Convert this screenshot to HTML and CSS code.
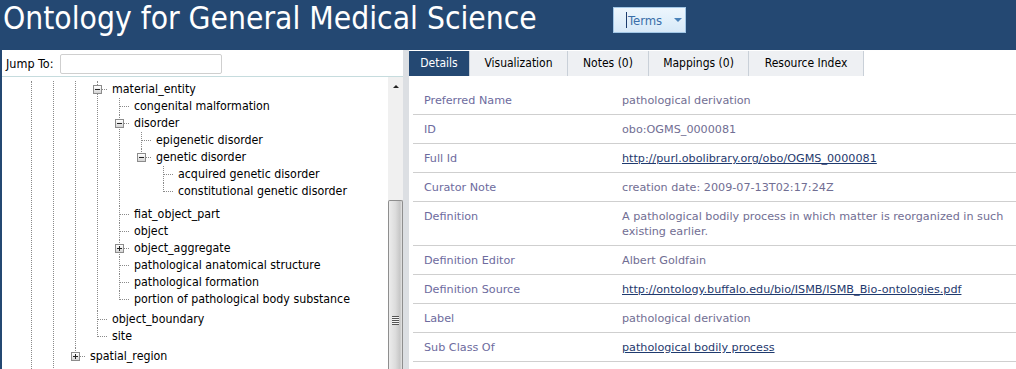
FILE: index.html
```html
<!DOCTYPE html>
<html>
<head>
<meta charset="utf-8">
<link rel="stylesheet" href="styles.css">
</head>
<body>
<div class="page">
  <header class="topbar">
    <h1 class="title">Ontology for General Medical Science</h1>
    <div class="terms"><span class="cursor"></span><span class="terms-label">Terms</span><span class="dd"></span></div>
  </header>
  <div class="main">
    <aside class="left">
      <div class="jump">
        <label class="jump-label">Jump To:</label>
        <input class="jump-input" type="text">
      </div>
      <div class="treewrap">
        <div class="tree">
          <ul class="lvl root">
            <li class="anc cont"><ul class="lvl">
              <li class="anc cont"><ul class="lvl">
                <li class="anc"><ul class="lvl">
                  <li><span class="tg minus"></span>material_entity
                    <ul class="lvl">
                      <li>congenital malformation</li>
                      <li><span class="tg minus"></span>disorder
                        <ul class="lvl">
                          <li>epigenetic disorder</li>
                          <li><span class="tg minus"></span>genetic disorder
                            <ul class="lvl">
                              <li>acquired genetic disorder</li>
                              <li>constitutional genetic disorder</li>
                            </ul>
                          </li>
                        </ul>
                      </li>
                      <li>fiat_object_part</li>
                      <li>object</li>
                      <li><span class="tg plus"></span>object_aggregate</li>
                      <li>pathological anatomical structure</li>
                      <li>pathological formation</li>
                      <li>portion of pathological body substance</li>
                    </ul>
                  </li>
                  <li>object_boundary</li>
                  <li>site</li>
                </ul></li>
                <li><span class="tg plus"></span>spatial_region</li>
              </ul></li>
            </ul></li>
          </ul>
        </div>
        <div class="scrollbar">
          <div class="sb-up"></div>
          <div class="sb-thumb"><div class="sb-grip"></div></div>
        </div>
      </div>
    </aside>
    <section class="right">
      <nav class="tabs">
        <div class="tab active">Details</div>
        <div class="tab">Visualization</div>
        <div class="tab">Notes (0)</div>
        <div class="tab">Mappings (0)</div>
        <div class="tab">Resource Index</div>
      </nav>
      <div class="content">
        <table class="details">
          <tr><td class="k">Preferred Name</td><td class="v">pathological derivation</td></tr>
          <tr><td class="k">ID</td><td class="v">obo:OGMS_0000081</td></tr>
          <tr><td class="k">Full Id</td><td class="v"><a href="#">http://purl.obolibrary.org/obo/OGMS_0000081</a></td></tr>
          <tr><td class="k">Curator Note</td><td class="v">creation date: 2009-07-13T02:17:24Z</td></tr>
          <tr><td class="k">Definition</td><td class="v">A pathological bodily process in which matter is reorganized in such<br>existing earlier.</td></tr>
          <tr><td class="k">Definition Editor</td><td class="v">Albert Goldfain</td></tr>
          <tr><td class="k">Definition Source</td><td class="v"><a href="#">http://ontology.buffalo.edu/bio/ISMB/ISMB_Bio-ontologies.pdf</a></td></tr>
          <tr><td class="k">Label</td><td class="v">pathological derivation</td></tr>
          <tr><td class="k">Sub Class Of</td><td class="v"><a href="#">pathological bodily process</a></td></tr>
        </table>
      </div>
    </section>
  </div>
</div>
</body>
</html>
```
FILE: styles.css
```css
* { box-sizing: border-box; }
html, body { margin: 0; padding: 0; }
body {
  width: 1016px;
  height: 369px;
  overflow: hidden;
  background: #fff;
  font-family: "DejaVu Sans Condensed", "DejaVu Sans", sans-serif;
}
.page { display: flex; flex-direction: column; height: 369px; }

/* header */
.topbar {
  height: 50px;
  flex-shrink: 0;
  background: #244872;
  display: flex;
  align-items: flex-start;
}
.title {
  margin: 0;
  width: 613px;
  flex-shrink: 0;
  padding-left: 3px;
  font-size: 31.5px;
  line-height: 36px;
  font-weight: normal;
  color: #fff;
  white-space: nowrap;
}
.terms {
  margin-top: 7px;
  width: 73px;
  height: 26px;
  border: 1px solid #a3c7e6;
  background: linear-gradient(#edf6fd, #d7e9f8);
  display: flex;
  align-items: center;
  padding-left: 12px;
  color: #3a6ea9;
  font-size: 13px;
}
.cursor { width: 1px; height: 16px; background: #1c3d6e; margin-right: 1px; }
.dd {
  margin-left: 12px;
  width: 0; height: 0;
  border-left: 4px solid transparent;
  border-right: 4px solid transparent;
  border-top: 4px solid #4b82b9;
}

/* main */
.main {
  flex: 1;
  display: flex;
  gap: 6px;
  background: #dcdfe3;
  min-height: 0;
}
.left {
  width: 403px;
  flex-shrink: 0;
  background: #fff;
  border-left: 2px solid #244872;
  display: flex;
  flex-direction: column;
  min-height: 0;
}
.jump {
  height: 27px;
  border-bottom: 1px solid #c6dcde;
  display: flex;
  align-items: center;
  padding-left: 4px;
  gap: 6px;
  flex-shrink: 0;
}
.jump-label { font-size: 12.5px; color: #000; }
.jump-input {
  width: 162px;
  height: 20px;
  border: 1px solid #cfcfcf;
  border-radius: 2px;
  margin-top: 1px;
}
.treewrap { flex: 1; display: flex; min-height: 0; }
.tree {
  flex: 1;
  overflow: hidden;
  padding: 3.5px 0 0 29px;
  font-size: 12.3px;
  color: #000;
}
.lvl { list-style: none; margin: 0; padding: 0; }
.lvl .lvl { margin-left: 7px; padding-bottom: 3px; }
.lvl li {
  position: relative;
  padding-left: 15px;
  line-height: 17px;
  white-space: nowrap;
}
.lvl li::before {
  content: "";
  position: absolute;
  left: 0; top: 0; bottom: 0;
  border-left: 1px dotted #8a8a8a;
}
.lvl li:last-child::before { bottom: auto; height: 9px; }
.lvl li::after {
  content: "";
  position: absolute;
  left: 1px; top: 8px;
  width: 9px;
  border-top: 1px dotted #8a8a8a;
}
.lvl li.anc::after { display: none; }
.lvl li.anc:last-child::before { bottom: 0; height: auto; }
.lvl li.cont { padding-bottom: 60px; }

.tg {
  position: absolute;
  left: -4px; top: 4px;
  width: 9px; height: 9px;
  border: 1px solid #8c8c8c;
  background: linear-gradient(#ffffff, #d4d4d4);
  z-index: 1;
}
.tg::before {
  content: "";
  position: absolute;
  left: 1px; top: 3px;
  width: 5px; height: 1px;
  background: #222;
}
.tg.plus::after {
  content: "";
  position: absolute;
  left: 3px; top: 1px;
  width: 1px; height: 5px;
  background: #222;
}

.scrollbar {
  width: 15px;
  flex-shrink: 0;
  background: #f0f0f0;
  display: flex;
  flex-direction: column;
  align-items: center;
}
.sb-up {
  margin-top: 8px;
  width: 0; height: 0;
  border-left: 3px solid transparent;
  border-right: 3px solid transparent;
  border-bottom: 3px solid #222;
}
.sb-thumb {
  margin-top: 112px;
  align-self: stretch;
  flex: 1;
  border: 1px solid #8e8e8e;
  border-bottom: none;
  border-radius: 2px 2px 0 0;
  background: linear-gradient(90deg, #ececec, #dcdcdc 50%, #c6c6c6 85%, #e6e6e6);
  display: flex;
  justify-content: center;
}
.sb-grip {
  margin-top: 115px;
  width: 7px;
  height: 9px;
  background: repeating-linear-gradient(#555 0 1px, #f6f6f6 1px 2px);
}

/* right */
.right {
  flex: 1;
  min-width: 0;
  background: #fff;
  display: flex;
  flex-direction: column;
  min-height: 0;
}
.tabs {
  margin-top: 1px;
  height: 25px;
  display: grid;
  grid-template-columns: 61px 98px 81px 100px 115px 1fr;
  background: #fff;
  flex-shrink: 0;
}
.tab {
  background: #eef0f3;
  border-right: 1px solid #c9d0d8;
  font-size: 12px;
  line-height: 25px;
  text-align: center;
  color: #000;
  white-space: nowrap;
}
.tab.active { background: #244872; color: #fff; }
.content {
  flex: 1;
  overflow: hidden;
  padding: 9px 0 0 4px;
  border-top: 1px solid #fff;
}
.details {
  border-collapse: collapse;
  table-layout: fixed;
  width: 800px;
  font-family: "DejaVu Sans", sans-serif;
}
.details td {
  padding: 7px 11px 6px;
  border-bottom: 1px solid #cfcfcf;
  line-height: 15px;
  font-size: 11.2px;
  vertical-align: top;
  white-space: nowrap;
  overflow: hidden;
}
.details .k { width: 198px; color: #6d6b9e; }
.details .v { color: #716e93; }
.details a { color: #1f3a6e; text-decoration: underline; }
```
